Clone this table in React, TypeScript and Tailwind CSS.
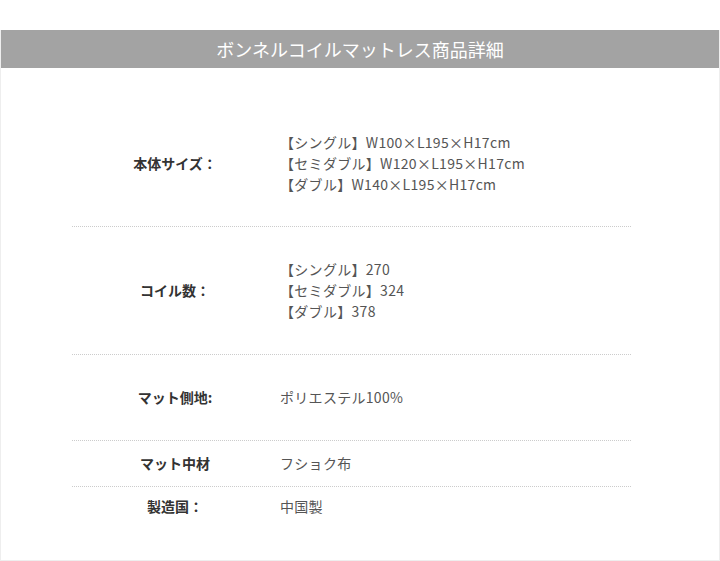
import React from "react";

const font = { fontFamily: '"Noto Sans CJK JP", "Noto Sans", sans-serif' };

type Row = { label: string; values: string[]; pt: string; pb: string; border: boolean };

const rows: Row[] = [
  {
    label: "本体サイズ：",
    values: ["【シングル】W100×L195×H17cm", "【セミダブル】W120×L195×H17cm", "【ダブル】W140×L195×H17cm"],
    pt: "pt-[31px]",
    pb: "pb-[31px]",
    border: true,
  },
  {
    label: "コイル数：",
    values: ["【シングル】270", "【セミダブル】324", "【ダブル】378"],
    pt: "pt-[32px]",
    pb: "pb-[32px]",
    border: true,
  },
  { label: "マット側地:", values: ["ポリエステル100%"], pt: "pt-[32px]", pb: "pb-[32px]", border: true },
  { label: "マット中材", values: ["フショク布"], pt: "pt-[12px]", pb: "pb-[12px]", border: true },
  { label: "製造国：", values: ["中国製"], pt: "pt-[9px]", pb: "pb-[9px]", border: false },
];

export default function App() {
  return (
    <div className="w-[720px] h-[561px] bg-white pt-[30px]" style={font}>
      <div className="h-[531px] border border-[#eeeeee] border-t-0 flex flex-col">
        <div className="h-[38px] bg-[#a3a3a3] flex items-center justify-center text-white text-[18px] leading-none">
          ボンネルコイルマットレス商品詳細
        </div>
        <div className="mt-[33px] ml-[71px] w-[559px]">
          {rows.map((r) => (
            <div
              key={r.label}
              className={`flex items-center ${r.pt} ${r.pb} ${r.border ? "border-b border-dotted border-[#cccccc]" : ""}`}
            >
              <div className="w-[206px] text-center text-[14px] font-bold text-[#333333] leading-[21px]">
                {r.label}
              </div>
              <div className="pl-[2px] text-[14px] text-[#555555] leading-[21px] tracking-[0.3px]">
                {r.values.map((v) => (
                  <div key={v}>{v}</div>
                ))}
              </div>
            </div>
          ))}
        </div>
      </div>
    </div>
  );
}
